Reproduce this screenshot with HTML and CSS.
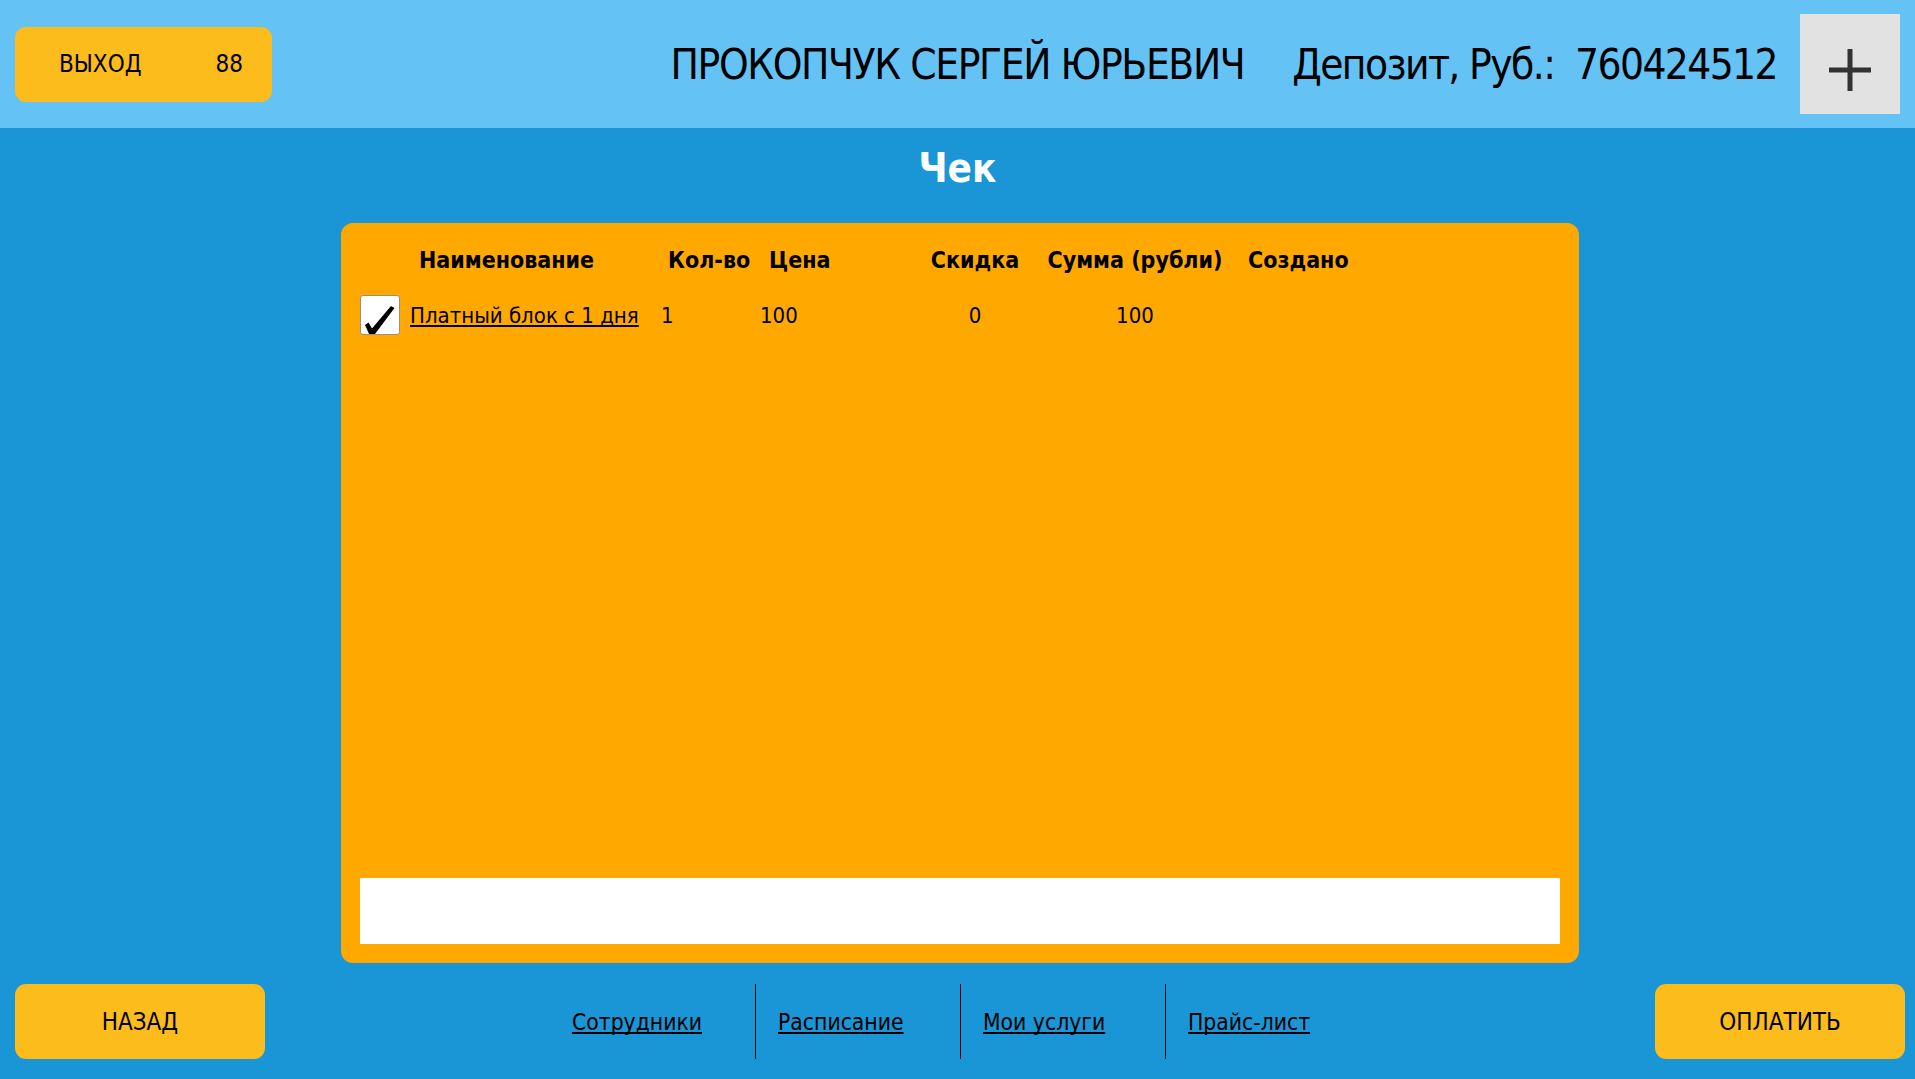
FILE: index.html
```html
<!DOCTYPE html>
<html>
<head>
  <meta charset="UTF-8">
  <title>Чек</title>
  <link rel="stylesheet" href="styles.css">
</head>
<body>
  <div id="topbar">
    <button class="btn" id="exit-button"><span>ВЫХОД</span><span id="timer">88</span></button>
    <div id="client-name">ПРОКОПЧУК СЕРГЕЙ ЮРЬЕВИЧ</div>
    <div id="deposit">Депозит, Руб.:&nbsp; <span id="deposit-value">760424512</span></div>
    <button id="add-button">
      <svg width="42" height="42" viewBox="0 0 42 42">
        <rect x="18.5" y="0" width="5" height="42" fill="#333"/>
        <rect x="0" y="18.5" width="42" height="5" fill="#333"/>
      </svg>
    </button>
  </div>

  <h1 id="title">Чек</h1>

  <div id="check">
    <div id="check-table">
      <div class="check-head">
        <div></div>
        <div class="col-name">Наименование</div>
        <div class="col-qty">Кол-во</div>
        <div class="col-price">Цена</div>
        <div class="col-discount">Скидка</div>
        <div class="col-sum">Сумма (рубли)</div>
        <div class="col-created">Создано</div>
      </div>
      <div class="check-row">
        <div class="checkbox">
          <svg width="40" height="40" viewBox="0 0 40 40">
            <path d="M5 30 L8.5 27.5 L12 33.5 L31 11 L34.5 13 L13.5 41 L10 41 Z" fill="#000"/>
          </svg>
        </div>
        <div class="col-name"><a href="#">Платный блок с 1 дня</a></div>
        <div class="col-qty">1</div>
        <div class="col-price">100</div>
        <div class="col-discount">0</div>
        <div class="col-sum">100</div>
        <div class="col-created"></div>
      </div>
    </div>
    <div id="check-total"></div>
  </div>

  <div id="footer">
    <button class="btn" id="back-button">НАЗАД</button>
    <div id="menu">
      <div class="menu-item"><a href="#">Сотрудники</a></div>
      <div class="menu-item"><a href="#">Расписание</a></div>
      <div class="menu-item"><a href="#">Мои услуги</a></div>
      <div class="menu-item"><a href="#">Прайс-лист</a></div>
    </div>
    <button class="btn" id="pay-button">ОПЛАТИТЬ</button>
  </div>
</body>
</html>
```

FILE: styles.css
```css
body {
  font-family: "DejaVu Sans Condensed", "DejaVu Sans", sans-serif;
  background-color: #1a95d6;
  color: #000;
  margin: 0;
  height: 100vh;
  display: flex;
  flex-direction: column;
}

a {
  color: #000;
  text-decoration-skip-ink: none;
}

.btn {
  font-family: inherit;
  font-size: 24px;
  color: #000;
  background-color: #fbbc1c;
  border: none;
  border-radius: 11px;
  height: 75px;
  cursor: pointer;
}

#topbar {
  height: 128px;
  flex-shrink: 0;
  background-color: #65c2f4;
  display: flex;
  align-items: center;
  padding: 0 15px;
}

#exit-button {
  width: 257px;
  display: flex;
  align-items: center;
  justify-content: space-between;
  padding: 0 29px 0 44px;
}

#client-name {
  margin-left: auto;
  font-size: 42px;
  letter-spacing: -1.4px;
}

#deposit {
  margin-left: 48px;
  font-size: 42px;
  letter-spacing: -1.6px;
}

#add-button {
  width: 100px;
  height: 100px;
  margin-left: 23px;
  background-color: #e2e2e2;
  border: none;
  display: flex;
  align-items: center;
  justify-content: center;
  padding: 12px 0 0 0;
}

#title {
  margin: 0;
  padding: 15px 0 30px;
  line-height: 50px;
  font-size: 40px;
  text-align: center;
  color: #fff;
}

#check {
  flex: 1;
  width: 1238px;
  margin-left: 341px;
  box-sizing: border-box;
  background-color: #ffa900;
  border-radius: 12px;
  padding: 22px 19px 19px;
  display: flex;
  flex-direction: column;
}

#check-table {
  flex: 1;
}

.check-head,
.check-row {
  display: grid;
  grid-template-columns: 50px 250px 100px 160px 110px 210px 1fr;
  align-items: center;
  font-size: 22px;
}

.check-head {
  font-weight: bold;
  font-size: 23px;
  height: 30px;
}

.check-row {
  margin-top: 20px;
  height: 40px;
}

.check-head .col-name { padding-left: 9px; }
.check-head .col-qty { padding-left: 8px; }
.check-head .col-price { padding-left: 9px; }
.check-row .col-qty { padding-left: 1px; }

.col-discount,
.col-sum {
  text-align: center;
}

.col-created {
  padding-left: 8px;
}

.checkbox {
  width: 38px;
  height: 38px;
  background-color: #fff;
  border: 1px solid #9a8f80;
  border-radius: 3px;
  overflow: hidden;
}

.checkbox svg {
  display: block;
  margin: -1px;
}

#check-total {
  height: 66px;
  background-color: #fff;
}

#footer {
  flex-shrink: 0;
  display: grid;
  grid-template-columns: 1fr auto 1fr;
  align-items: center;
  padding: 21px 10px 20px 15px;
}

#back-button {
  width: 250px;
}

#pay-button {
  width: 250px;
  justify-self: end;
}

#menu {
  display: flex;
}

.menu-item {
  width: 205px;
  height: 75px;
  box-sizing: border-box;
  padding-left: 22px;
  display: flex;
  align-items: center;
  font-size: 22.7px;
}

.menu-item + .menu-item {
  border-left: 1px solid #000;
}
```
